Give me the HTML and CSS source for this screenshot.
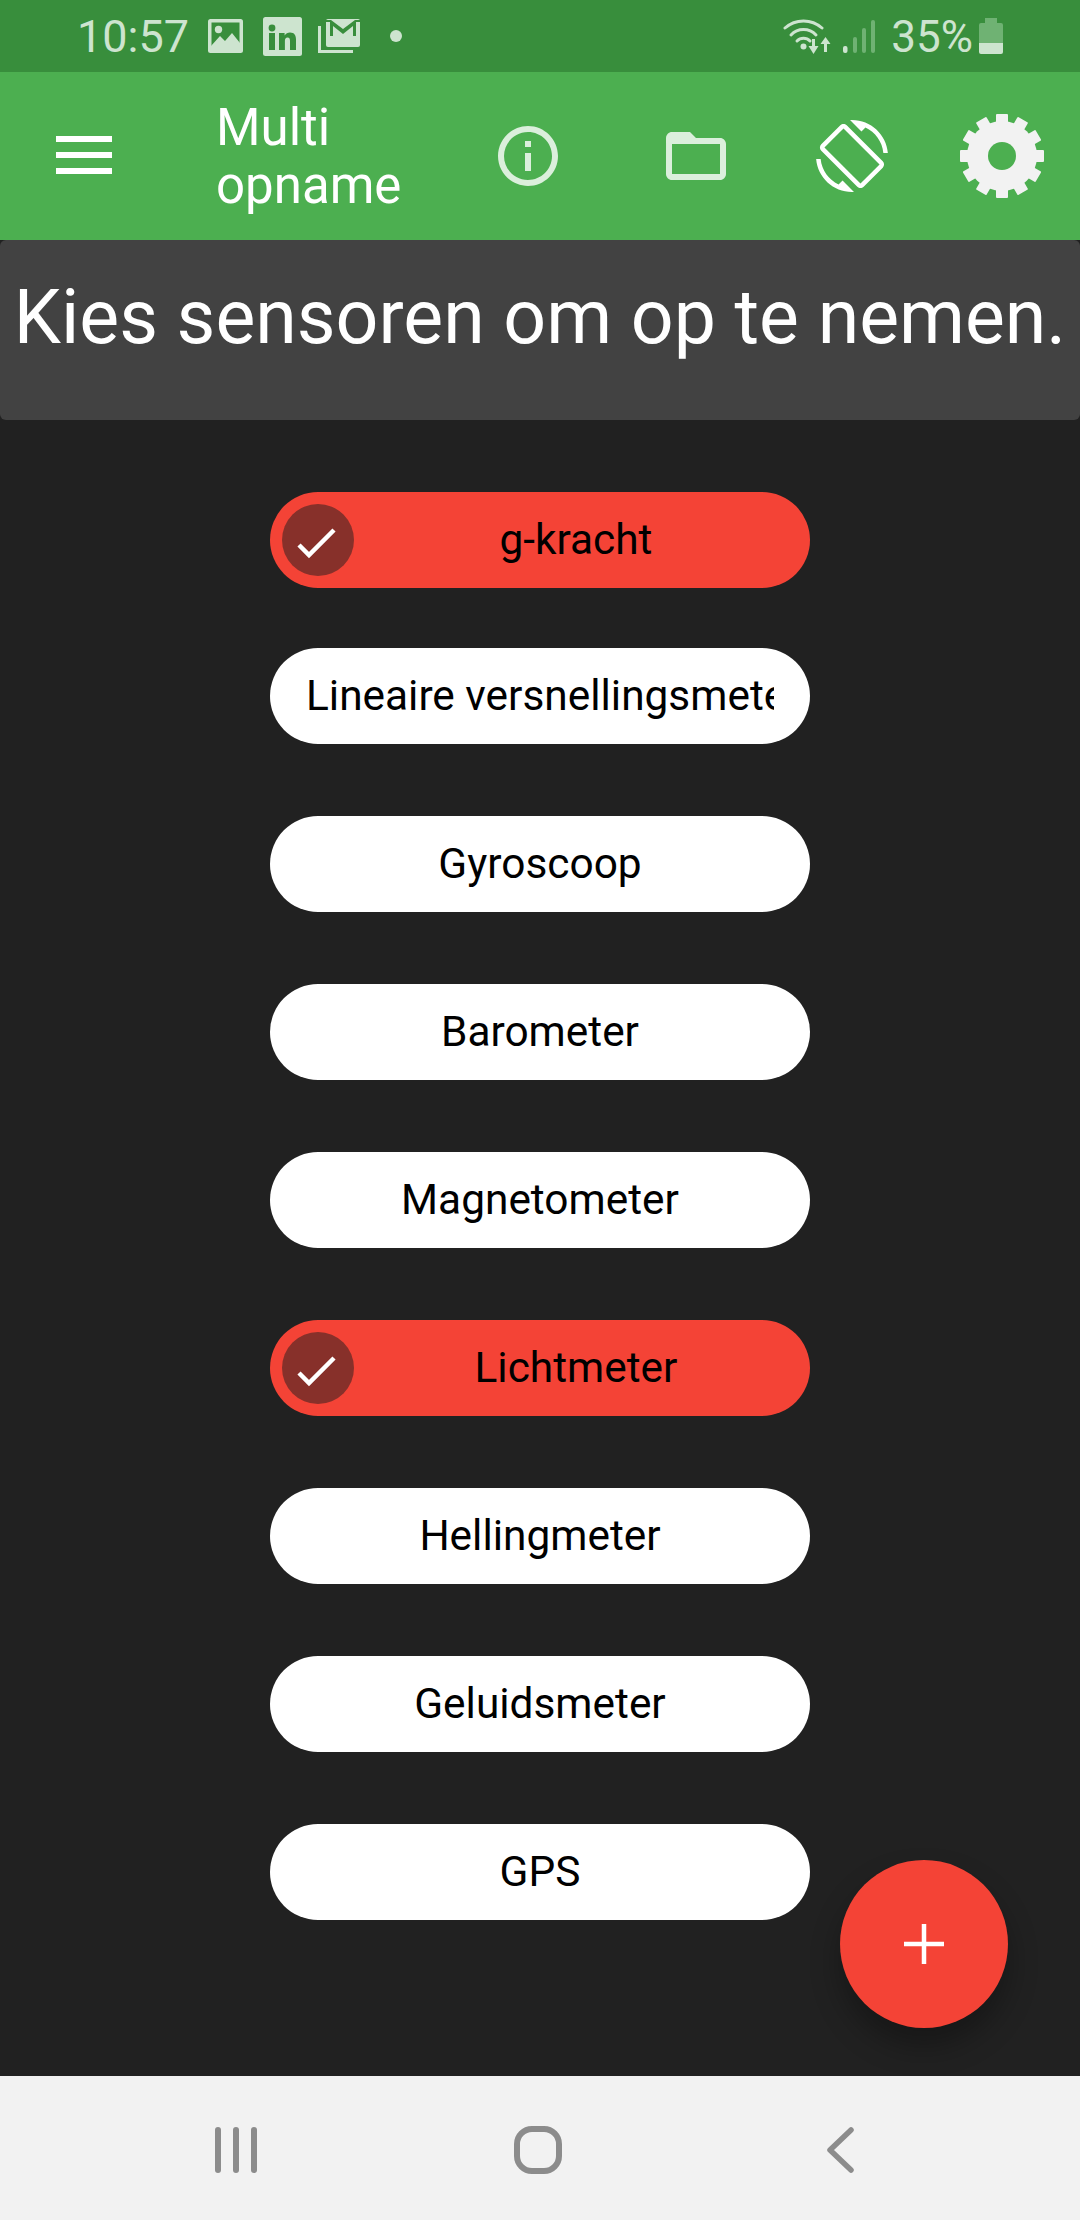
FILE: index.html
```html
<!DOCTYPE html>
<html lang="nl">
<head>
<meta charset="utf-8">
<title>Multi opname</title>
<link rel="stylesheet" href="styles.css">
</head>
<body>
<div class="screen">
  <header class="status">
    <span class="time">10:57</span>
    <svg class="st-image" width="35" height="34" viewBox="0 0 35 34"><rect width="35" height="34" rx="2.5" fill="#CDE4CF"/><rect x="3.5" y="3.5" width="28" height="27" fill="#388E3C"/><circle cx="10.5" cy="10.5" r="3.7" fill="#CDE4CF"/><path d="M3 27 L12 17 L17 22 L24 14 L32 24 V31 H3Z" fill="#CDE4CF"/></svg>
    <svg class="st-in" width="39" height="39" viewBox="0 0 39 39"><rect width="39" height="39" rx="2.5" fill="#CDE4CF"/><circle cx="9" cy="11" r="3.4" fill="#388E3C"/><rect x="6" y="16" width="6" height="17" fill="#388E3C"/><path d="M16 16h5.6v2.6c1.2-2 3.2-3 5.4-3 4.4 0 6 2.8 6 7V33h-6v-9.2c0-2.2-.7-3.4-2.5-3.4s-2.6 1.3-2.6 3.4V33H16Z" fill="#388E3C"/></svg>
    <svg class="st-mail" width="42" height="34" viewBox="0 0 42 34"><path d="M1.5 7 V32.5 H35" fill="none" stroke="#CDE4CF" stroke-width="3"/><rect x="8" y="0" width="34" height="28" rx="2" fill="#CDE4CF"/><path d="M8 1 L13 1 L25 10 L37 1 L42 1 L42 3 L38 3 L38 17 L35 17 L35 7 L25 15 L15 7 L15 17 L12 17 L12 3 L8 3Z" fill="#388E3C"/></svg>
    <span class="st-dot"></span>
    <span class="st-spacer"></span>
    <svg class="st-wifi" width="49" height="35" viewBox="0 0 49 35"><g fill="none" stroke="#CDE4CF" stroke-width="3" stroke-linecap="round"><path d="M2 9 A27.7 27.7 0 0 1 39 9"/><path d="M8 16 A17 17 0 0 1 33 16"/><path d="M14 22 A9 9 0 0 1 27 22"/></g><circle cx="20.5" cy="27.5" r="3" fill="#CDE4CF"/><path d="M29 20 h3 v7 h3.500 L30.500 35 L25.500 27 h3.500Z" fill="#CDE4CF"/><path d="M41 33 h3 v-8 h3.500 L42.500 18 L37.500 25 h3.500Z" fill="#CDE4CF"/></svg>
    <svg class="st-signal" width="32" height="33" viewBox="0 0 32 33"><rect x="0" y="26" width="4.500" height="7" rx="2" fill="#CDE4CF"/><rect x="10" y="17" width="4" height="16" rx="2" fill="#6FB273"/><rect x="19" y="8" width="4" height="25" rx="2" fill="#6FB273"/><rect x="28" y="0" width="4" height="33" rx="2" fill="#6FB273"/></svg>
    <span class="pct">35%</span>
    <svg class="st-batt" width="24" height="36" viewBox="0 0 24 36"><path d="M6 0 H18 V5 H22 a2 2 0 0 1 2 2 V25 H0 V7 a2 2 0 0 1 2-2 H6Z" fill="#6FB273"/><path d="M0 25 H24 V34 a2 2 0 0 1-2 2 H2 a2 2 0 0 1-2-2Z" fill="#CDE4CF"/></svg>
  </header>

  <nav class="appbar">
    <div class="burger"><span></span><span></span><span></span></div>
    <h1 class="title">Multi<br>opname</h1>
    <svg class="ab-info" width="60" height="60" viewBox="2 2 20 20"><path fill="#DBEFDC" d="M11 7h2v2h-2zm0 4h2v6h-2zm1-9C6.480 2 2 6.480 2 12s4.480 10 10 10 10-4.480 10-10S17.520 2 12 2zm0 18c-4.410 0-8-3.590-8-8s3.590-8 8-8 8 3.590 8 8-3.590 8-8 8z"/></svg>
    <svg class="ab-folder" width="60" height="48" viewBox="2 4 20 16"><path fill="#DBEFDC" d="M20 6h-8l-2-2H4c-1.100 0-1.990.9-1.990 2L2 18c0 1.100.9 2 2 2h16c1.100 0 2-.9 2-2V8c0-1.100-.9-2-2-2zm0 12H4V8h16v10z"/></svg>
    <svg class="ab-rotate" width="72" height="72" viewBox="0 0 24 24"><path fill="#fff" d="M16.480 2.520c3.270 1.550 5.610 4.720 5.970 8.480h1.500C23.440 4.840 18.290 0 12 0l-.66.03 3.810 3.810 1.330-1.320zm-6.250-.77c-.59-.59-1.540-.59-2.120 0L1.750 8.110c-.59.59-.59 1.540 0 2.120l12.020 12.020c.59.59 1.540.59 2.120 0l6.360-6.360c.59-.59.59-1.540 0-2.120L10.230 1.750zm4.600 19.440L2.810 9.170l6.360-6.360 12.020 12.020-6.360 6.360zm-7.310.29C4.250 19.940 1.910 16.760 1.550 13H.05C.56 19.160 5.710 24 12 24l.66-.03-3.810-3.810-1.330 1.320z"/></svg>
    <svg class="ab-gear" width="84" height="84" viewBox="-42 -42 84 84">
      <g fill="#F2F2F2">
        <rect x="-6" y="-42" width="12" height="84" rx="1"/>
        <rect x="-6" y="-42" width="12" height="84" rx="1" transform="rotate(30)"/>
        <rect x="-6" y="-42" width="12" height="84" rx="1" transform="rotate(60)"/>
        <rect x="-6" y="-42" width="12" height="84" rx="1" transform="rotate(90)"/>
        <rect x="-6" y="-42" width="12" height="84" rx="1" transform="rotate(120)"/>
        <rect x="-6" y="-42" width="12" height="84" rx="1" transform="rotate(150)"/>
        <circle r="35"/>
      </g>
      <circle r="14" fill="#4CAF50"/>
    </svg>
  </nav>

  <main class="content">
    <div class="banner">Kies sensoren om op te nemen.</div>
    <div class="chips">
      <div class="chip chip-on chip-lead">
        <span class="check"><svg width="72" height="72" viewBox="0 0 72 72"><path d="M17 41 L27 51 L52 26" fill="none" stroke="#fff" stroke-width="4.500"/></svg></span>
        <span class="label">g-kracht</span>
      </div>
      <div class="chip"><span class="label">Lineaire versnellingsmeter</span></div>
      <div class="chip"><span class="label">Gyroscoop</span></div>
      <div class="chip"><span class="label">Barometer</span></div>
      <div class="chip"><span class="label">Magnetometer</span></div>
      <div class="chip chip-on">
        <span class="check"><svg width="72" height="72" viewBox="0 0 72 72"><path d="M17 41 L27 51 L52 26" fill="none" stroke="#fff" stroke-width="4.500"/></svg></span>
        <span class="label">Lichtmeter</span>
      </div>
      <div class="chip"><span class="label">Hellingmeter</span></div>
      <div class="chip"><span class="label">Geluidsmeter</span></div>
      <div class="chip"><span class="label">GPS</span></div>
    </div>
    <button class="fab" type="button" aria-label="Toevoegen"><svg width="40" height="40" viewBox="0 0 40 40"><path d="M20 0 V40 M0 20 H40" stroke="#fff" stroke-width="4.500"/></svg></button>
  </main>

  <footer class="navbar">
    <svg class="nv-recents" width="42" height="46" viewBox="0 0 42 46"><g stroke="#8C8C8C" stroke-width="6" stroke-linecap="round"><path d="M3 3 V43"/><path d="M21 3 V43"/><path d="M39 3 V43"/></g></svg>
    <svg class="nv-home" width="48" height="48" viewBox="0 0 48 48"><rect x="3" y="3" width="42" height="42" rx="15" fill="none" stroke="#8C8C8C" stroke-width="6"/></svg>
    <svg class="nv-back" width="27" height="46" viewBox="0 0 27 46"><path d="M24 3 L3 23 L24 43" fill="none" stroke="#8C8C8C" stroke-width="5.500" stroke-linecap="round" stroke-linejoin="round"/></svg>
  </footer>
</div>
</body>
</html>
```
FILE: styles.css
```css
* { box-sizing: border-box; }
html, body { margin: 0; padding: 0; }
body { font-family: Roboto, "Noto Sans", sans-serif; background: #212121; }

.screen { width: 1080px; height: 2220px; display: flex; flex-direction: column; overflow: hidden; }

/* status bar */
.status { height: 72px; flex: none; background: #388E3C; color: #CDE4CF; display: flex; align-items: center; padding: 0 77px 0 77px; }
.time { font-size: 45px; line-height: 72px; width: 111px; padding-top: 2px; }
.st-image { margin-left: 20px; }
.st-in { margin-left: 20px; }
.st-mail { margin-left: 16px; }
.st-dot { width: 12px; height: 12px; border-radius: 50%; background: #CDE4CF; margin-left: 30px; }
.st-spacer { flex: 1; }
.st-wifi { margin-right: 11px; }
.st-signal { margin-right: 16px; }
.pct { font-size: 44px; line-height: 72px; margin-right: 6px; padding-top: 2px; }

/* app bar */
.appbar { height: 168px; flex: none; background: #4CAF50; display: flex; align-items: center; padding-left: 56px; }
.burger { width: 56px; display: flex; flex-direction: column; gap: 10px; margin-top: -2px; }
.burger span { display: block; height: 6px; background: #fff; }
.title { margin: 0 0 0 104px; width: 282px; font-size: 51px; font-weight: 400; line-height: 58px; color: #fff; padding-top: 2px; }
.ab-info { flex: none; }
.ab-folder { margin-left: 108px; flex: none; }
.ab-rotate { margin-left: 90px; flex: none; }
.ab-gear { margin-left: 72px; flex: none; }

/* content */
.content { flex: 1; position: relative; background: #212121; }
.banner { height: 180px; background: #424242; border-radius: 6px; color: #fff; font-size: 75.2px; line-height: 84px; padding-top: 35px; text-align: center; white-space: nowrap; }
.chips { padding-top: 72px; display: flex; flex-direction: column; align-items: center; gap: 72px; }
.chip { width: 540px; height: 96px; flex: none; border-radius: 48px; background: #fff; color: #000; display: flex; align-items: center; font-size: 42.4px; padding: 0 36px 2px; }
.chip-lead { margin-bottom: -12px; }
.chip-on { background: #F44336; padding-left: 12px; padding-bottom: 0; }
.chip-on .label { padding-bottom: 2px; }
.check { width: 72px; height: 72px; flex: none; border-radius: 50%; background: #87302A; margin-right: 24px; display: block; }
.check svg { display: block; }
.label { flex: 1; min-width: 0; overflow: hidden; white-space: nowrap; text-align: center; }

.fab { position: absolute; right: 72px; bottom: 48px; width: 168px; height: 168px; border: 0; padding: 0; border-radius: 50%; background: #F44336; box-shadow: 0 18px 30px rgba(0,0,0,.3); display: flex; align-items: center; justify-content: center; }

/* navigation bar */
.navbar { height: 144px; flex: none; background: #F2F2F2; display: flex; align-items: center; padding: 4px 0 0 215px; }
.nv-home { margin-left: 257px; }
.nv-back { margin-left: 265px; }
```
